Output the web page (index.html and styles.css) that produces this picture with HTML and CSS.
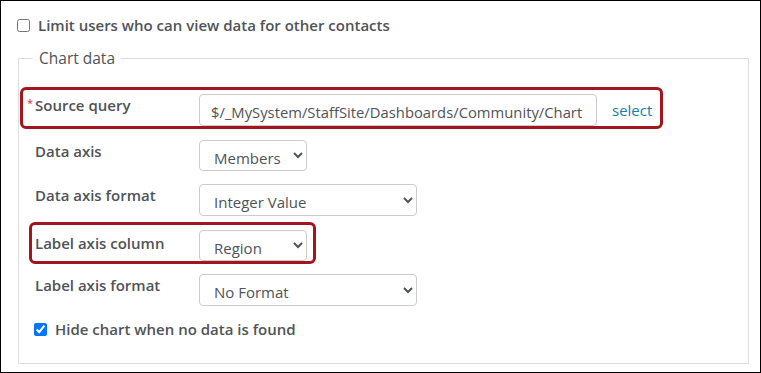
FILE: index.html
```html
<!DOCTYPE html>
<html lang="en">
<head>
    <meta charset="UTF-8">
    <meta name="viewport" content="width=device-width, initial-scale=1.0">
    <title>Chart data settings</title>
    <link rel="stylesheet" href="styles.css">
</head>
<body>
    <div class="panel">
        <label class="check-row top-check">
            <input type="checkbox">
            <span>Limit users who can view data for other contacts</span>
        </label>
        <fieldset class="chart-data">
            <legend>Chart data</legend>
            <div class="form-row highlight highlight-wide">
                <label class="field-label required" for="source_query">Source query</label>
                <input type="text" id="source_query" class="text-input" value="$/_MySystem/StaffSite/Dashboards/Community/Chart">
                <a href="#" class="select-link">select</a>
            </div>
            <div class="form-row">
                <label class="field-label" for="data_axis">Data axis</label>
                <select id="data_axis" class="select-small">
                    <option>Members</option>
                </select>
            </div>
            <div class="form-row before-highlight">
                <label class="field-label" for="data_axis_format">Data axis format</label>
                <select id="data_axis_format" class="select-wide">
                    <option>Integer Value</option>
                </select>
            </div>
            <div class="form-row highlight highlight-narrow">
                <label class="field-label" for="label_axis_column">Label axis column</label>
                <select id="label_axis_column" class="select-small">
                    <option>Region</option>
                </select>
            </div>
            <div class="form-row">
                <label class="field-label" for="label_axis_format">Label axis format</label>
                <select id="label_axis_format" class="select-wide">
                    <option>No Format</option>
                </select>
            </div>
            <label class="check-row bottom-check">
                <input type="checkbox" checked>
                <span>Hide chart when no data is found</span>
            </label>
        </fieldset>
    </div>
</body>
</html>
```

FILE: styles.css
```css
body {
    margin: 0;
    font-family: "Open Sans", "Noto Sans", sans-serif;
    color: #505357;
    background: #fff;
}
.panel {
    width: 761px;
    height: 373px;
    box-sizing: border-box;
    border: 1px solid #000;
    padding: 14px 11px 0 17px;
}
.check-row {
    display: flex;
    align-items: center;
    font-size: 15px;
    font-weight: 600;
    line-height: 20px;
}
.check-row input {
    width: 13px;
    height: 13px;
    margin: 0 8px 0 0;
}
.top-check {
    margin-left: -1px;
}
.chart-data {
    margin: 13px 0 0 0;
    padding: 0 16px 0 16px;
    border: 1px solid #ddd;
    height: 316px;
    box-sizing: border-box;
}
.chart-data legend {
    margin-left: -2px;
    padding: 0 6px;
    font-size: 15.5px;
    line-height: 20px;
    font-weight: 500;
}
.form-row {
    display: flex;
    align-items: flex-start;
    margin-bottom: 13px;
}
.form-row.before-highlight {
    margin-bottom: 6px;
}
.field-label {
    width: 164px;
    flex-shrink: 0;
    font-size: 15px;
    font-weight: 600;
    line-height: 20px;
    padding-top: 1px;
    position: relative;
}
.required::before {
    content: "*";
    position: absolute;
    left: -8px;
    top: -1px;
    color: #e0262b;
    font-size: 11px;
    font-weight: 400;
}
.highlight {
    border: 3px solid #a0151f;
    border-radius: 6px;
    width: fit-content;
}
.highlight-wide {
    margin: 19px 0 11px -15px;
    padding: 4px 8px 0 12px;
}
.highlight-narrow {
    margin: 0 0 10px -6px;
    padding: 5px 6px 0 3px;
}
.highlight-narrow .field-label {
    padding-top: 3px;
}
.text-input {
    width: 398px;
    height: 32px;
    box-sizing: border-box;
    border: 1px solid #ccc;
    border-radius: 4px;
    padding: 3px 8px 0 11px;
    font-family: inherit;
    font-size: 14.8px;
    color: #505357;
}
.select-link {
    margin: 6px 0 0 15px;
    font-size: 15px;
    line-height: 20px;
    color: #1b7ba4;
    text-decoration: none;
}
select {
    height: 32px;
    box-sizing: border-box;
    border: 1px solid #ccc;
    border-radius: 4px;
    background: #fff;
    padding: 4px 6px 0 10px;
    font-family: inherit;
    font-size: 15px;
    color: #505357;
}
.select-small {
    width: 108px;
    height: 31px;
}
.select-wide {
    width: 218px;
}
.bottom-check {
    margin: 12px 0 0 -1px;
}
```
